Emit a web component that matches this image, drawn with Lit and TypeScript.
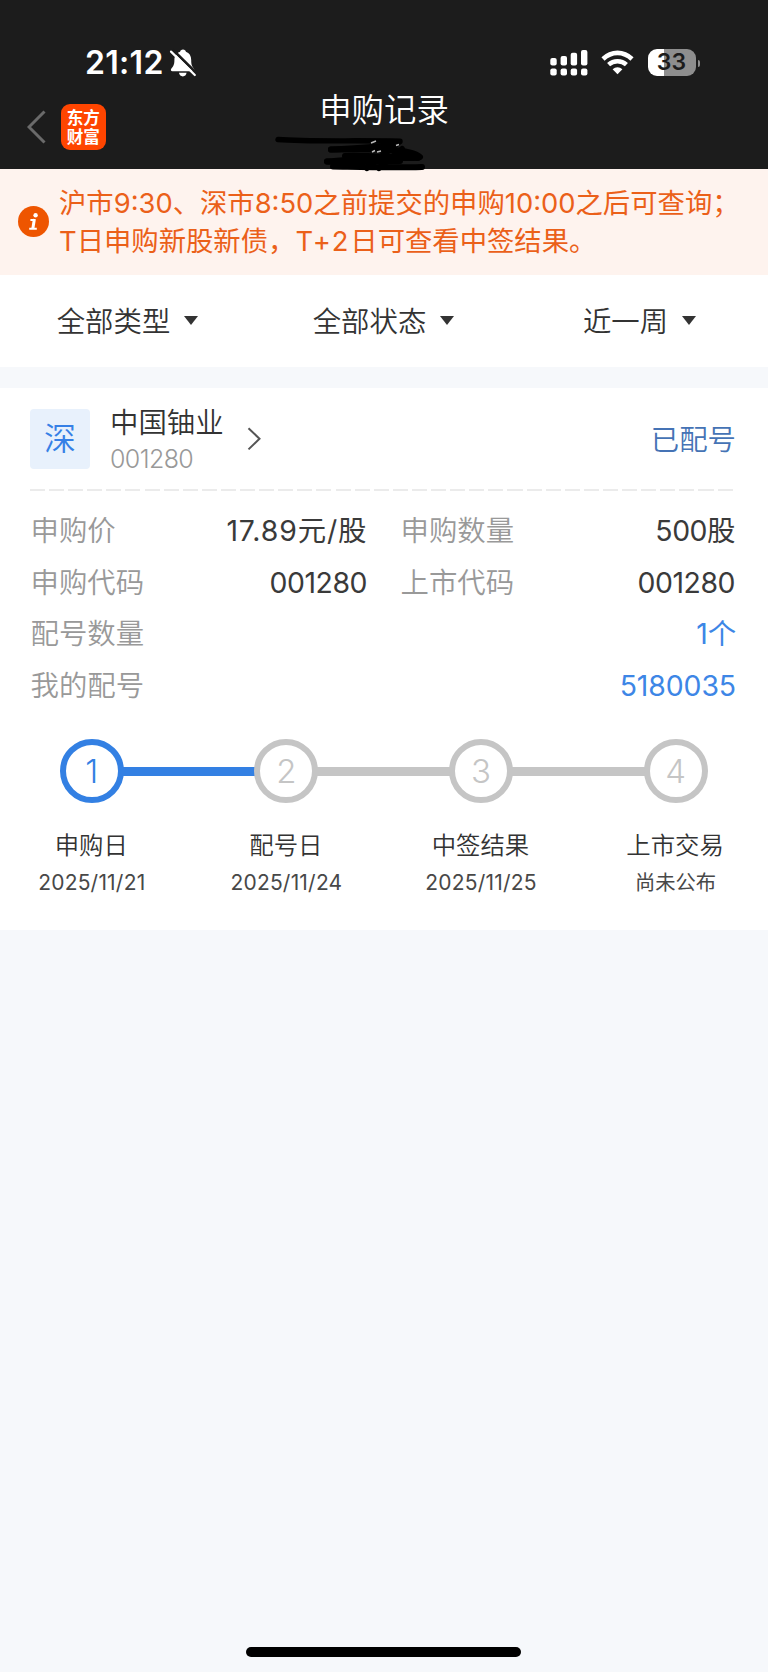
import { LitElement, html, css, svg } from "lit";
import { customElement } from "lit/decorators.js";
import { classMap } from "lit/directives/class-map.js";

interface Step {
  name: string;
  date: string;
  active: boolean;
}

const FILTERS = ["全部类型", "全部状态", "近一周"];

const STEPS: Step[] = [
  { name: "申购日", date: "2025/11/21", active: true },
  { name: "配号日", date: "2025/11/24", active: false },
  { name: "中签结果", date: "2025/11/25", active: false },
  { name: "上市交易", date: "尚未公布", active: false },
];

const SIGNAL = [
  { x: 0.3, y: 8 },
  { x: 10.6, y: 6 },
  { x: 20.7, y: 2.8 },
  { x: 31, y: 0 },
];

@customElement("status-bar")
class StatusBar extends LitElement {
  static styles = css`
    :host {
      display: flex;
      height: 26px;
      padding: 50px 68px 0 85px;
      align-items: center;
      color: #fff;
    }
    .time {
      font-size: 32px;
      font-weight: 600;
      line-height: 26px;
      letter-spacing: 0.3px;
      width: 78px;
      white-space: nowrap;
    }
    .bell {
      margin-left: 7px;
    }
    .right {
      margin-left: auto;
      display: flex;
      align-items: center;
    }
    .wifi {
      margin-left: 13px;
      margin-top: -2px;
    }
    .battery {
      margin-left: 14px;
      margin-top: -1px;
      width: 48px;
      height: 27px;
      border-radius: 9px;
      background: linear-gradient(90deg, #fff 16.5px, #8e8e8e 16.5px);
      color: #1c1c1c;
      font-size: 23px;
      font-weight: 600;
      line-height: 27px;
      text-align: center;
    }
    .nub {
      margin-left: 2px;
      width: 2.5px;
      height: 7px;
      border-radius: 0 3px 3px 0;
      background: #8e8e8e;
    }
    svg {
      display: block;
      overflow: visible;
    }
  `;

  render() {
    return html`
      <span class="time">21:12</span>
      <svg class="bell" width="26" height="28" viewBox="0 0 26 28">
        <path
          fill="#fff"
          d="M13 0.6c1.7 0 2.6 1 2.9 2.2 3.6 1.2 5.3 4.2 5.3 8.2 0 5 1 6.6 2.6 8.4 0.9 1 0.6 2.8-1 2.8H2.4c-1.6 0-2-1.7-1-2.8C3.2 17.5 4.4 16 4.4 11c0-4 2-7 5.7-8.2C10.4 1.6 11.3 0.6 13 0.6z"
        />
        <path fill="#fff" d="M9 23.8h7.6c-0.4 2.2-1.8 3.6-3.8 3.6S9.4 26 9 23.8z" />
        <path d="M2.8 0.8L26.6 24.2" stroke="#1c1c1c" stroke-width="2.6" />
        <path d="M1 2.6L24.8 26" stroke="#fff" stroke-width="2.2" stroke-linecap="round" />
      </svg>
      <div class="right">
        <svg width="38" height="26" viewBox="0 0 38 26">
          ${SIGNAL.map(
            (b) => svg`
              <rect x=${b.x} y=${b.y} width="6.4" height=${15.6 - b.y} rx="2" fill="#fff"></rect>
              <rect x=${b.x} y="18.6" width="6.4" height="7" rx="2" fill="#fff"></rect>`
          )}
        </svg>
        <svg class="wifi" width="33" height="25" viewBox="0 0 33 25">
          <path d="M2 9C10.5 0.8 22.5 0.8 31 9" fill="none" stroke="#fff" stroke-width="4.6" />
          <path d="M7.6 14.7C12.6 10 20.4 10 25.4 14.7" fill="none" stroke="#fff" stroke-width="4.4" />
          <path d="M11.6 19.2C14.5 16.5 18.5 16.5 21.4 19.2L16.5 24.3z" fill="#fff" />
        </svg>
        <div class="battery">33</div>
        <div class="nub"></div>
      </div>
    `;
  }
}

@customElement("record-card")
class RecordCard extends LitElement {
  static styles = css`
    :host {
      display: flex;
      flex-direction: column;
      box-sizing: border-box;
      height: 542px;
      padding: 21.5px 33px 0 30px;
      background: #fff;
    }
    .head {
      display: flex;
      align-items: center;
      height: 60px;
      margin-right: -1px;
    }
    .market {
      width: 60px;
      height: 60px;
      border-radius: 4px;
      background: #e8f1fc;
      color: #3680e6;
      font-size: 32px;
      line-height: 60px;
      text-align: center;
    }
    .stock {
      margin-left: 20px;
    }
    .name {
      color: #333;
      font-size: 28.4px;
      line-height: 37px;
      margin-top: -3px;
    }
    .code {
      color: #999;
      font-size: 25px;
      line-height: 37px;
      letter-spacing: -0.6px;
      margin-bottom: -7px;
    }
    .arrow {
      margin-left: 23px;
      display: block;
    }
    .state {
      margin-left: auto;
      padding-bottom: 3px;
      color: #4573b5;
      font-size: 28.4px;
    }
    .rule {
      height: 2px;
      margin-top: 20px;
      background: repeating-linear-gradient(90deg, #ebebeb 0 15px, transparent 15px 19.1px);
    }
    .rows {
      margin: 13.8px -1px 0 0;
    }
    .row {
      display: grid;
      grid-template-columns: 337px 335px;
      column-gap: 33px;
      height: 51.8px;
    }
    .wide {
      grid-template-columns: 1fr;
    }
    .cell {
      display: flex;
      justify-content: space-between;
      align-items: center;
      font-size: 28.4px;
      line-height: 51.8px;
      white-space: nowrap;
    }
    .label {
      color: #999;
      padding-left: 0.5px;
    }
    .value {
      color: #3a3a3a;
      font-weight: 400;
      letter-spacing: -0.45px;
    }
    .loose {
      letter-spacing: 0.9px;
      margin-right: -0.4px;
    }
    .link {
      color: #3d86e6;
      letter-spacing: -0.1px;
    }
    .steps {
      display: grid;
      grid-template-columns: repeat(4, 194.6px);
      margin: 26.6px -40px 0 -35.5px;
    }
    .step {
      display: flex;
      flex-direction: column;
      align-items: center;
    }
    .track {
      align-self: stretch;
      display: grid;
      grid-template-columns: 1fr 64px 1fr;
      align-items: center;
    }
    .bar {
      height: 9px;
      margin: 1.5px -1px 0;
      background: #c5c5c5;
    }
    .done {
      background: #3380e3;
    }
    .none {
      background: none;
    }
    .dot {
      box-sizing: border-box;
      width: 64px;
      height: 64px;
      border: 6.4px solid #c5c5c5;
      border-radius: 50%;
      color: #c5c5c5;
      font-size: 33px;
      font-weight: 300;
      line-height: 53px;
      text-align: center;
    }
    .on {
      border-color: #3380e3;
      color: #3380e3;
    }
    .title {
      margin-top: 24px;
      margin-right: 1px;
      color: #333;
      font-size: 24.4px;
      line-height: 36px;
    }
    .date {
      margin-top: 2.5px;
      color: #484848;
      font-size: 21px;
      font-weight: 400;
      line-height: 36px;
      letter-spacing: 0.2px;
    }
    .text {
      font-size: 20.3px;
      letter-spacing: 0;
    }
  `;

  private cell(label: string, value: string, link = false) {
    return html`<div class="cell">
      <span class="label">${label}</span>
      <span class=${classMap({ value: true, link, loose: value.includes(".") })}>${value}</span>
    </div>`;
  }

  render() {
    return html`
      <div class="head">
        <div class="market">深</div>
        <div class="stock">
          <div class="name">中国铀业</div>
          <div class="code">001280</div>
        </div>
        <svg class="arrow" width="15" height="24" viewBox="0 0 15 24">
          <path d="M1.5 1.2L12.5 11.8L1.5 22.4" fill="none" stroke="#555" stroke-width="2" />
        </svg>
        <span class="state">已配号</span>
      </div>
      <div class="rule"></div>
      <div class="rows">
        <div class="row">${this.cell("申购价", "17.89元/股")}${this.cell("申购数量", "500股")}</div>
        <div class="row">${this.cell("申购代码", "001280")}${this.cell("上市代码", "001280")}</div>
        <div class="row wide">${this.cell("配号数量", "1个", true)}</div>
        <div class="row wide">${this.cell("我的配号", "5180035", true)}</div>
      </div>
      <div class="steps">
        ${STEPS.map(
          (s, i) => html`<div class="step">
            <div class="track">
              <div class=${classMap({ bar: true, none: i === 0, done: i > 0 && STEPS[i - 1].active })}></div>
              <div class=${classMap({ dot: true, on: s.active })}>${i + 1}</div>
              <div class=${classMap({ bar: true, none: i === STEPS.length - 1, done: s.active })}></div>
            </div>
            <div class="title">${s.name}</div>
            <div class=${classMap({ date: true, text: !s.date.includes("/") })}>${s.date}</div>
          </div>`
        )}
      </div>
    `;
  }
}

@customElement("app-root")
class AppRoot extends LitElement {
  static styles = css`
    :host {
      display: flex;
      flex-direction: column;
      width: 768px;
      height: 1672px;
      overflow: hidden;
      background: #f6f8fb;
      font-family: Inter, "Noto Sans CJK SC", sans-serif;
      font-weight: 350;
    }
    .header {
      position: relative;
      height: 168.5px;
      background: #1c1c1c;
      color: #fff;
    }
    .nav {
      display: grid;
      grid-template-columns: 1fr auto 1fr;
      padding: 15px 27px 0;
    }
    .back {
      display: flex;
      align-items: center;
      padding-top: 13px;
      height: 46px;
    }
    .logo {
      box-sizing: border-box;
      width: 45.5px;
      height: 45.5px;
      padding-top: 4px;
      margin-left: 14.5px;
      border-radius: 9px;
      background: #ff4500;
      font-family: "Noto Sans CJK SC", sans-serif;
      font-size: 16.6px;
      font-weight: 700;
      line-height: 19px;
      text-align: center;
    }
    .title {
      padding-top: 1px;
      font-size: 32.4px;
      line-height: 38px;
    }
    .scribble {
      position: absolute;
      left: 270px;
      top: 134px;
      z-index: 1;
    }
    .notice {
      display: flex;
      align-items: center;
      height: 106px;
      padding-left: 18px;
      background: #fef3ee;
      color: #eb6019;
    }
    .info {
      width: 31px;
      height: 31px;
      border-radius: 50%;
      background: #ee5500;
    }
    .lines {
      margin-left: 10px;
      padding-top: 2px;
      font-size: 27.35px;
      font-weight: 400;
      line-height: 37.5px;
      white-space: nowrap;
    }
    .term {
      letter-spacing: 1.8px;
    }
    .filters {
      display: grid;
      grid-template-columns: repeat(3, 1fr);
      height: 92.5px;
      background: #fff;
    }
    .filter {
      display: flex;
      align-items: center;
      justify-content: center;
      gap: 14px;
      padding-right: 1px;
      color: #333;
      font-size: 28.4px;
    }
    .name {
      padding-bottom: 3px;
    }
    .caret {
      border: 7px solid transparent;
      border-top: 9px solid #333;
      border-bottom: 0;
    }
    record-card {
      margin-top: 20.5px;
    }
    .home {
      width: 275px;
      height: 10px;
      margin: auto auto 15px 246px;
      border-radius: 5px;
      background: #000;
    }
  `;

  render() {
    return html`
      <div class="header">
        <status-bar></status-bar>
        <div class="nav">
          <div class="back">
            <svg width="19" height="34" viewBox="0 0 19 34">
              <path d="M17.5 1.5L2 17L17.5 32.5" fill="none" stroke="#6a6a6a" stroke-width="3" />
            </svg>
            <div class="logo">东方<br />财富</div>
          </div>
          <div class="title">申购记录</div>
        </div>
        <svg class="scribble" width="160" height="40" viewBox="0 0 160 40">
          <g fill="none" stroke="#000" stroke-width="6" stroke-linecap="round" stroke-linejoin="round">
            <path d="M8 5.5C40 8 90 6 130 7.3" stroke-width="5.4" />
            <path d="M61 15.5C90 14 106 14 124 10" />
            <path d="M61 15.5C100 15 140 14 150 23C140 27 100 20 75 22" />
            <path d="M57 27.5C90 25 120 20 148 24" />
            <path d="M57 27.5C80 29 100 27 130 27" />
            <path d="M63 32.5C90 33 120 34 152 33" />
            <path d="M97 34L128 9M109 34L132 15" />
          </g>
          <path d="M101 9l5-2M102 18l3-1.5M107 18l4-1M126 11.5l3-1" stroke="#bbb" stroke-width="1.4" />
        </svg>
      </div>
      <div class="notice">
        <svg class="info" viewBox="0 0 31 31">
          <circle cx="17.6" cy="9.2" r="2.2" fill="#fff" />
          <path d="M12.4 14H17M11.2 22.8H18.8" fill="none" stroke="#fff" stroke-width="2" />
          <path d="M16.4 13L14.8 22.8" stroke="#fff" stroke-width="3" />
        </svg>
        <div class="lines">
          <div>沪市9:30、深市8:50之前提交的申购10:00之后可查询；</div>
          <div>T日申购新股新债，<span class="term">T+2</span>日可查看中签结果。</div>
        </div>
      </div>
      <div class="filters">
        ${FILTERS.map(
          (f) => html`<div class="filter"><span class="name">${f}</span><i class="caret"></i></div>`
        )}
      </div>
      <record-card></record-card>
      <div class="home"></div>
    `;
  }
}
